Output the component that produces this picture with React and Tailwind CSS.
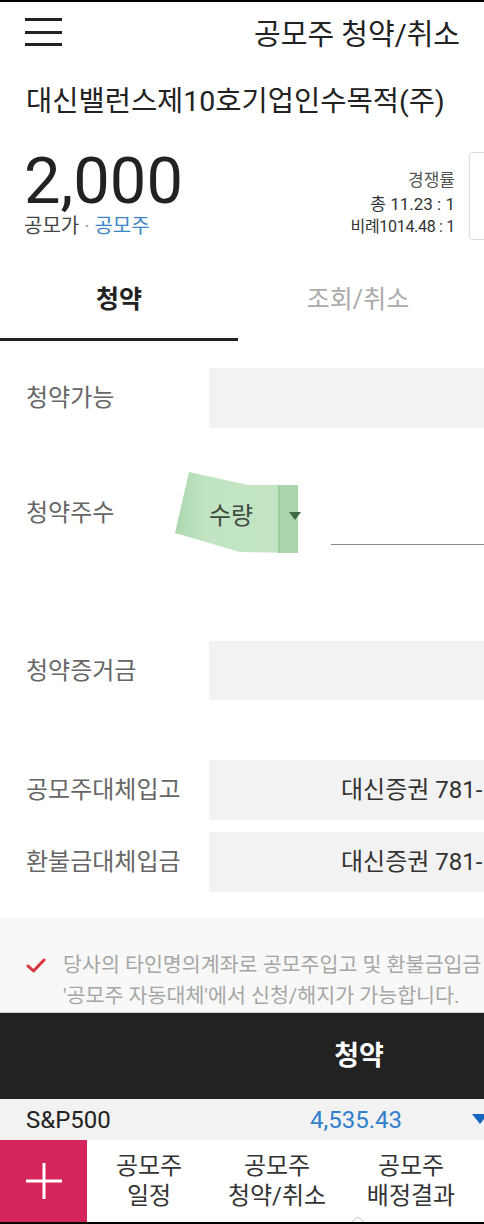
import React from 'react';

const font = { fontFamily: 'Roboto, "Noto Sans CJK KR", "Noto Sans", sans-serif' };

const Tape = () => (
    <div className="relative w-[130px] h-[86px] shrink-0">
        <svg width="130" height="86" viewBox="0 0 130 86" className="block">
            <defs>
                <linearGradient id="tapeL" x1="0" x2="1" y1="0" y2="0">
                    <stop offset="0" stopColor="#acd7ae" />
                    <stop offset="0.25" stopColor="#c1e4c2" />
                    <stop offset="1" stopColor="#c3e5c4" />
                </linearGradient>
            </defs>
            <polygon points="14,2 73,15 123,15 123,83 65,82 0,63" fill="url(#tapeL)" />
            <rect x="103" y="15" width="20" height="68" fill="#a9d7ab" />
            <rect x="103" y="15" width="2" height="68" fill="#9bcf9e" />
            <polygon points="114,42 126,42 120,50" fill="#3e6b46" />
        </svg>
        <span className="absolute left-[34px] top-[31px] text-[24px] leading-[30px] text-[#3f4a40]">수량</span>
    </div>
);

const FieldBox = ({ children }) => (
    <div className="flex-1 h-[60px] bg-[#f2f2f2] flex items-center pl-[132px] whitespace-nowrap overflow-hidden text-[24px] text-[#333]">
        {children}
    </div>
);

const Label = ({ children }) => (
    <div className="w-[209px] shrink-0 pl-[26px] text-[24px] text-[#666] leading-[30px]">{children}</div>
);

export default function App() {
    return (
        <div style={font} className="relative w-[484px] h-[1224px] overflow-hidden bg-white border-t-2 border-black">
            {/* header */}
            <div className="h-[66px] flex items-center justify-between pl-[25px] pr-[24px]">
                <div className="flex flex-col gap-[9.5px] -mt-[6px]">
                    <div className="w-[37px] h-[3px] bg-[#222]" />
                    <div className="w-[37px] h-[3px] bg-[#222]" />
                    <div className="w-[37px] h-[3px] bg-[#222]" />
                </div>
                <div className="text-[29px] leading-[36px] text-[#222]">공모주 청약/취소</div>
            </div>

            <div className="pl-[26px] mt-[16px] text-[28.5px] leading-[36px] text-[#222] whitespace-nowrap">대신밸런스제10호기업인수목적(주)</div>

            {/* price + stats */}
            <div className="flex mt-[29px] h-[92px]">
                <div className="pl-[24px] flex-1 pt-[4px]">
                    <div className="text-[65px] leading-[56px] text-[#222]">2,000</div>
                    <div className="text-[20px] leading-[24px] text-[#444] mt-[5px]">
                        공모가 <span className="text-[#999]">·</span> <span className="text-[#3a86c8]">공모주</span>
                    </div>
                </div>
                <div className="flex flex-col items-end pt-[19px] pr-[14px] text-[#333]">
                    <div className="text-[17px] leading-[24px] text-[#555]">경쟁률</div>
                    <div className="text-[17px] leading-[24px]">총 11.23 : 1</div>
                    <div className="text-[16px] leading-[22px] tracking-[-0.3px]">비례1014.48 : 1</div>
                </div>
                <div className="w-[30px] h-[88px] mt-[3px] -mr-[15px] border border-[#ddd] rounded-[3px] shrink-0" />
            </div>

            {/* tabs */}
            <div className="flex mt-[20px]">
                <div className="w-[238px] h-[80px] flex items-center justify-center border-b-[3px] border-[#222] text-[25px] font-bold text-[#222]">
                    청약
                </div>
                <div className="w-[240px] h-[80px] flex items-center justify-center text-[25px] text-[#aaa] pb-[3px]">
                    조회/취소
                </div>
            </div>

            {/* rows */}
            <div className="flex items-center mt-[27px]">
                <Label>청약가능</Label>
                <div className="flex-1 h-[60px] bg-[#f2f2f2]" />
            </div>

            <div className="flex items-center mt-[42px] h-[86px]">
                <div className="w-[175px] shrink-0 pl-[26px] text-[24px] text-[#666] leading-[30px]">청약주수</div>
                <Tape />
                <div className="flex-1 ml-[26px] h-[1px] bg-[#888] self-end mb-[11px]" />
            </div>

            <div className="flex items-center mt-[85px]">
                <Label>청약증거금</Label>
                <div className="flex-1 h-[59px] bg-[#f2f2f2]" />
            </div>

            <div className="flex items-center mt-[60px]">
                <Label>공모주대체입고</Label>
                <FieldBox>대신증권 781-</FieldBox>
            </div>

            <div className="flex items-center mt-[12px]">
                <Label>환불금대체입금</Label>
                <FieldBox>대신증권 781-</FieldBox>
            </div>

            {/* notice */}
            <div className="mt-[26px] h-[95px] bg-[#f8f8f8] pt-[32px] border-b border-[#ccc] overflow-hidden">
                <div className="flex">
                    <svg width="20" height="16" viewBox="0 0 20 16" className="ml-[26px] mt-[8px] shrink-0">
                        <path d="M2 8 L7.5 13 L18 2" fill="none" stroke="#d7333c" strokeWidth="3" strokeLinecap="round" strokeLinejoin="round" />
                    </svg>
                    <div className="ml-[17px] text-[20.6px] leading-[31px] text-[#a6a6a6] whitespace-nowrap">
                        <div>당사의 타인명의계좌로 공모주입고 및 환불금입금</div>
                        <div>'공모주 자동대체'에서 신청/해지가 가능합니다.</div>
                    </div>
                </div>
            </div>

            {/* submit bar */}
            <div className="h-[86px] bg-[#222] flex">
                <div className="w-[238px]" />
                <div className="w-[242px] flex items-center justify-center text-[27px] font-bold text-white">청약</div>
            </div>

            {/* index ticker */}
            <div className="h-[41px] bg-[#f2f2f2] flex items-center pl-[26px] relative">
                <div className="w-[284px] text-[24px] text-[#222]">S&amp;P500</div>
                <div className="text-[24px] text-[#2f7fcc]">4,535.43</div>
                <svg width="16" height="12" viewBox="0 0 16 12" className="absolute left-[472px] top-[15px]">
                    <polygon points="0,0 16,0 8,10" fill="#1565c0" />
                </svg>
            </div>

            {/* bottom nav */}
            <div className="h-[84px] flex border-b-2 border-black">
                <div className="w-[87px] bg-[#d6255a] flex items-center justify-center">
                    <svg width="38" height="38" viewBox="0 0 38 38">
                        <path d="M19 1 V37 M1 19 H37" stroke="#fff" strokeWidth="3" />
                    </svg>
                </div>
                <div className="w-[124px] flex flex-col items-center justify-center text-[24px] leading-[30px] text-[#333]">
                    <span>공모주</span>
                    <span>일정</span>
                </div>
                <div className="w-[132px] flex flex-col items-center justify-center text-[24px] leading-[30px] text-[#333]">
                    <span>공모주</span>
                    <span>청약/취소</span>
                </div>
                <div className="w-[136px] flex flex-col items-center justify-center text-[24px] leading-[30px] text-[#333] relative">
                    <span>공모주</span>
                    <span>배정결과</span>
                    <svg width="14" height="6" viewBox="0 0 14 6" className="absolute left-[8px] bottom-0">
                        <path d="M1 6 L7 1 L13 6" fill="none" stroke="#bbb" strokeWidth="1" />
                    </svg>
                </div>
            </div>
        </div>
    );
}
